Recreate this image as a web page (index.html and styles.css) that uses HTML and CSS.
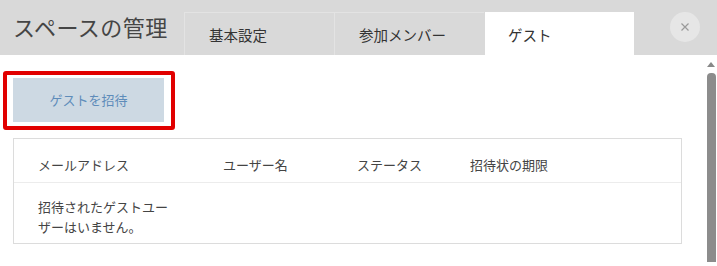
FILE: index.html
```html
<!DOCTYPE html>
<html lang="ja">
<head>
<meta charset="utf-8">
<link rel="stylesheet" href="styles.css">
</head>
<body>
<div class="dialog">
  <header class="header">
    <h1 class="title">スペースの管理</h1>
    <nav class="tabs">
      <div class="tab">基本設定</div>
      <div class="tab">参加メンバー</div>
      <div class="tab tab-active">ゲスト</div>
    </nav>
    <div class="close-wrap"><button class="close" aria-label="close">
      <svg width="10" height="10" viewBox="0 0 10 10"><path d="M1.5 1.5L8.5 8.5M8.5 1.5L1.5 8.5" stroke="#9a9a9a" stroke-width="1.2" fill="none"/></svg>
    </button></div>
  </header>
  <main class="content">
    <div class="highlight">
      <button class="invite">ゲストを招待</button>
    </div>
    <div class="table">
      <div class="row head">
        <div>メールアドレス</div>
        <div>ユーザー名</div>
        <div>ステータス</div>
        <div>招待状の期限</div>
      </div>
      <div class="row body">
        <div class="empty">招待されたゲストユーザーはいません。</div>
      </div>
    </div>
  </main>
  <div class="scroll-arrow"></div>
  <div class="scroll-thumb"></div>
</div>
</body>
</html>
```
FILE: styles.css
```css
* { box-sizing: border-box; }
html, body { margin: 0; padding: 0; background: #fff; }
body {
  font-family: "Noto Sans CJK JP", "Noto Sans", sans-serif;
  color: #333;
  width: 717px;
  height: 266px;
  overflow: hidden;
}
.dialog { position: relative; width: 717px; height: 266px; }
.header {
  display: flex;
  align-items: flex-end;
  height: 55px;
  background: #d9d9d9;
}
.title {
  margin: 0;
  align-self: flex-start;
  width: 184px;
  padding: 10px 0 0 13px;
  font-size: 22px;
  line-height: 32px;
  font-weight: 400;
  color: #454545;
  letter-spacing: 0.5px;
}
.tabs { display: flex; height: 43px; }
.tab {
  width: 150px;
  height: 43px;
  padding: 12px 0 0 24px;
  font-size: 14.5px;
  line-height: 20px;
  color: #333;
  background: #d9d9d9;
  border-left: 1px solid #e3e3e3;
  border-top: 1px solid #e3e3e3;
}
.tab-active {
  background: #fff;
  border-color: #fff;
  width: 149px;
  padding-left: 22px;
  margin-left: 1px;
}
.close-wrap {
  flex: 1;
  align-self: stretch;
  display: flex;
  justify-content: flex-end;
  padding: 12px 17px 0 0;
}
.close {
  width: 30px;
  height: 30px;
  border-radius: 50%;
  border: none;
  background: #e6e6e6;
  display: flex;
  align-items: center;
  justify-content: center;
  padding: 0;
}
.content { padding: 16px 0 0 0; }
.highlight {
  display: block;
  width: fit-content;
  margin-left: 3px;
  border: 4px solid #e10000;
  border-radius: 3px;
  padding: 3px 7px 4px 6px;
}
.invite {
  display: block;
  width: 151px;
  height: 44px;
  border: none;
  background: #cdd9e3;
  color: #5e8cba;
  font-family: "Noto Sans CJK JP", "Noto Sans", sans-serif;
  font-size: 13px;
  line-height: 20px;
  padding: 0;
}
.table {
  margin: 8px 0 0 13px;
  width: 669px;
  border: 1px solid #dcdcdc;
}
.row {
  display: grid;
  grid-template-columns: 185px 134px 113px 1fr;
  padding-left: 24px;
  font-size: 13px;
  line-height: 19px;
  color: #444;
}
.head {
  padding-top: 16px;
  padding-bottom: 8px;
  border-bottom: 1px solid #ececec;
}
.body {
  padding-top: 14px;
  padding-bottom: 6px;
  line-height: 20px;
}
.empty { width: 140px; }
.scroll-arrow {
  position: absolute;
  left: 707px;
  top: 62px;
  width: 0;
  height: 0;
  border-left: 4px solid transparent;
  border-right: 4px solid transparent;
  border-bottom: 5px solid #888;
}
.scroll-thumb {
  position: absolute;
  left: 707px;
  top: 73px;
  width: 9px;
  height: 189px;
  border-radius: 4px 4px 0 0;
  background: #8c8c8c;
}
```
